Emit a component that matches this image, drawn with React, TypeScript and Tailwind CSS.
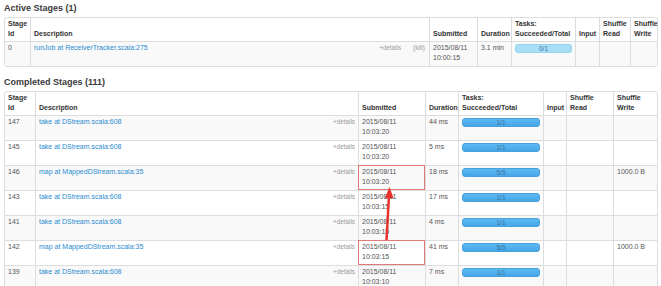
import React from "react";

interface Stage {
  id: number;
  desc: string;
  date: string;
  time: string;
  duration: string;
  tasks: string;
  write?: string;
  marked?: boolean;
}

const take = "take at DStream.scala:608";
const map = "map at MappedDStream.scala:35";

const completed: Stage[] = [
  { id: 147, desc: take, date: "2015/08/11", time: "10:03:20", duration: "44 ms", tasks: "1/1" },
  { id: 145, desc: take, date: "2015/08/11", time: "10:03:20", duration: "5 ms", tasks: "1/1" },
  { id: 146, desc: map, date: "2015/08/11", time: "10:03:20", duration: "18 ms", tasks: "5/5", write: "1000.0 B", marked: true },
  { id: 143, desc: take, date: "2015/08/11", time: "10:03:15", duration: "17 ms", tasks: "1/1" },
  { id: 141, desc: take, date: "2015/08/11", time: "10:03:15", duration: "4 ms", tasks: "1/1" },
  { id: 142, desc: map, date: "2015/08/11", time: "10:03:15", duration: "41 ms", tasks: "5/5", write: "1000.0 B", marked: true },
  { id: 139, desc: take, date: "2015/08/11", time: "10:03:10", duration: "7 ms", tasks: "1/1" },
];

const th = "border-l border-[#ddd] px-[3px] pt-[1px] pb-[2px] text-left align-bottom font-bold text-[#333]";
const thFirst = "px-[3px] pt-[1px] pb-[2px] text-left align-bottom font-bold text-[#333]";
const td = "border-l border-t border-[#ddd] px-[3px] pt-[1px] pb-[3px] align-top";
const tdFirst = "border-t border-[#ddd] px-[3px] pt-[1px] pb-[3px] align-top";

function Bar({ text, started }: { text: string; started?: boolean }) {
  return (
    <div
      className={
        started
          ? "relative mt-[1px] h-[9px] rounded-[3px] border border-[#96d3ef] bg-[#a9def7]"
          : "relative mt-[1px] h-[9px] rounded-[3px] border border-[#45a0dc] bg-linear-to-b from-[#5cb9f2] to-[#46a7e7]"
      }
    >
      <span className="absolute inset-0 text-center text-[6.5px] leading-[7px] text-[#3b73a0]">{text}</span>
    </div>
  );
}

function HeaderRow() {
  return (
    <tr>
      <th className={thFirst}>Stage<br />Id</th>
      <th className={th}><br />Description</th>
      <th className={th}><br />Submitted</th>
      <th className={th}><br />Duration</th>
      <th className={th}>Tasks:<br />Succeeded/Total</th>
      <th className={th}><br />Input</th>
      <th className={th}>Shuffle<br />Read</th>
      <th className={th}>Shuffle<br />Write</th>
    </tr>
  );
}

export default function App() {
  return (
    <div
      className="relative w-[661px] h-[286px] overflow-hidden bg-white pt-[2px] pl-[4px] pr-[3px] text-[7px] leading-[10px] text-[#555]"
      style={{ fontFamily: '"Liberation Sans", Arial, sans-serif' }}
    >
      {/* Active stages */}
      <h4 className="text-[9px] leading-[12px] font-bold mb-[3px] text-[#3a3a3a]">Active Stages (1)</h4>
      <table className="w-full table-fixed border-separate border-spacing-0 border border-[#ddd] rounded-[3px]">
        <colgroup>
          <col className="w-[25px]" />
          <col className="w-[399px]" />
          <col className="w-[48px]" />
          <col className="w-[34px]" />
          <col className="w-[64px]" />
          <col className="w-[24px]" />
          <col className="w-[31px]" />
          <col className="w-[27px]" />
        </colgroup>
        <thead>
          <HeaderRow />
        </thead>
        <tbody className="bg-[#f9f9f9]">
          <tr>
            <td className={tdFirst}>0</td>
            <td className={td}>
              <span className="float-right mr-[1px] ml-[12px] text-[6.5px] text-[#999]">(kill)</span>
              <span className="float-right ml-[6px] text-[6.3px] text-[#999]">+details</span>
              <span className="text-[#2a8bd0]">runJob at ReceiverTracker.scala:275</span>
            </td>
            <td className={td}>2015/08/11<br />10:00:15</td>
            <td className={td}>3.1 min</td>
            <td className={td}><Bar text="0/1" started /></td>
            <td className={td}></td>
            <td className={td}></td>
            <td className={td}></td>
          </tr>
        </tbody>
      </table>

      {/* Completed stages */}
      <h4 className="mt-[9px] text-[9px] leading-[12px] font-bold mb-[3px] text-[#3a3a3a]">Completed Stages (111)</h4>
      <table className="w-full table-fixed border-separate border-spacing-0 border border-[#ddd] rounded-[3px]">
        <colgroup>
          <col className="w-[30px]" />
          <col className="w-[323px]" />
          <col className="w-[67px]" />
          <col className="w-[33px]" />
          <col className="w-[85px]" />
          <col className="w-[23px]" />
          <col className="w-[47px]" />
          <col className="w-[44px]" />
        </colgroup>
        <thead>
          <HeaderRow />
        </thead>
        <tbody>
          {completed.map((s, i) => (
            <tr key={s.id} className={i % 2 === 0 ? "bg-[#f9f9f9]" : "bg-white"}>
              <td className={tdFirst}>{s.id}</td>
              <td className={td}>
                <span className="float-right text-[6.3px] text-[#999]">+details</span>
                <span className="text-[#2a8bd0]">{s.desc}</span>
              </td>
              <td className={s.marked ? `${td} outline outline-1 -outline-offset-1 outline-[#e07a78]` : td}>
                {s.date}<br />{s.time}
              </td>
              <td className={td}>{s.duration}</td>
              <td className={td}><Bar text={s.tasks} /></td>
              <td className={td}></td>
              <td className={td}></td>
              <td className={td}>{s.write}</td>
            </tr>
          ))}
        </tbody>
      </table>

      {/* red annotation arrow */}
      <svg className="absolute left-0 top-0 pointer-events-none" width="661" height="286" viewBox="0 0 661 286">
        <line x1="389" y1="196" x2="386.5" y2="240" stroke="#e8322c" strokeWidth="2.5" />
        <polygon points="389.5,187 385,198 393.5,198" fill="#e8322c" />
      </svg>
    </div>
  );
}
